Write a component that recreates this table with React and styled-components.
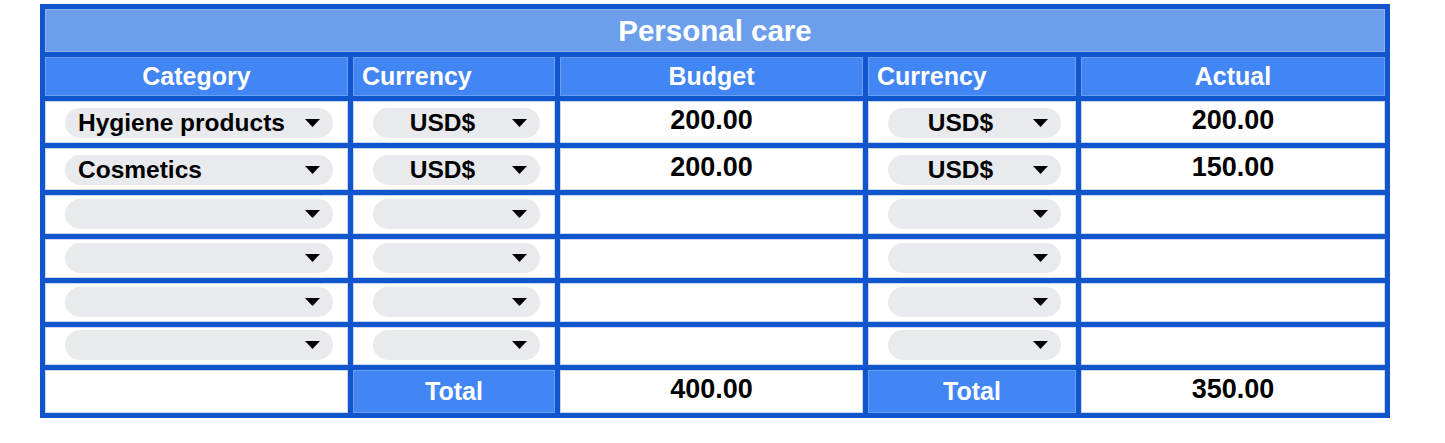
import React from 'react';
import styled, { createGlobalStyle } from 'styled-components';

const GlobalStyle = createGlobalStyle`
  body {
    margin: 0;
    background: #ffffff;
    font-family: "Liberation Sans", Arial, sans-serif;
  }
`;

const Page = styled.div`
  padding: 4px 0 0 40px;
`;

const Sheet = styled.div`
  display: grid;
  width: max-content;
  grid-template-columns: 303px 202px 303px 208px 304px;
  grid-template-rows: 43px 39px 42px 42px 39px 39px 39px 38px 43px;
  gap: 5px;
  padding: 5px;
  background: #1155cc;
`;

const Cell = styled.div`
  display: flex;
  align-items: center;
  justify-content: ${({ $left }) => ($left ? 'flex-start' : 'center')};
  padding-left: ${({ $left }) => ($left ? '9px' : '0')};
  background: ${({ $tone }) =>
    $tone === 'title' ? '#6d9eeb' : $tone === 'head' ? '#4285f4' : '#ffffff'};
  box-shadow: inset 0 0 0 1px
    ${({ $tone }) => ($tone === 'title' ? '#8fb3ef' : $tone === 'head' ? '#6a9ef6' : '#c9d6ee')};
  color: ${({ $tone }) => ($tone ? '#ffffff' : '#000000')};
  font-weight: 700;
  font-size: ${({ $tone }) => ($tone === 'title' ? '29.5px' : '25px')};
  ${({ $span }) => ($span ? `grid-column: 1 / span ${$span};` : '')}
`;

const Title = styled(Cell)`
  padding-top: 1px;
`;

const Amount = styled(Cell)`
  font-size: 27px;
  padding-bottom: 4px;
`;

const ChipCell = styled(Cell)`
  align-items: flex-end;
  justify-content: stretch;
  padding: 0 15px 5px 20px;
`;

const Chip = styled.div`
  flex: 1;
  display: flex;
  align-items: center;
  height: 30px;
  border-radius: 15px;
  background: #e8eaed;
  padding: 0 13px 0 ${({ $center }) => ($center ? '0' : '13px')};
  font-size: 24.5px;
  font-weight: 700;
  color: #000000;
`;

const ChipText = styled.span`
  flex: 1;
  text-align: ${({ $center }) => ($center ? 'center' : 'left')};
  white-space: nowrap;
`;

const Arrow = () => (
  <svg width="15" height="8" viewBox="0 0 15 8" style={{ flex: 'none' }}>
    <polygon points="0,0 15,0 7.5,8" fill="#000000" />
  </svg>
);

const Select = ({ value, center }) => (
  <ChipCell>
    <Chip $center={center}>
      <ChipText $center={center}>{value}</ChipText>
      <Arrow />
    </Chip>
  </ChipCell>
);

const rows = [
  { category: 'Hygiene products', currency: 'USD$', budget: '200.00', actualCurrency: 'USD$', actual: '200.00' },
  { category: 'Cosmetics', currency: 'USD$', budget: '200.00', actualCurrency: 'USD$', actual: '150.00' },
  {}, {}, {}, {},
];

export default function App() {
  return (
    <>
      <GlobalStyle />
      <Page>
        <Sheet>
          <Title $tone="title" $span={5}>Personal care</Title>

          <Cell $tone="head">Category</Cell>
          <Cell $tone="head" $left>Currency</Cell>
          <Cell $tone="head">Budget</Cell>
          <Cell $tone="head" $left>Currency</Cell>
          <Cell $tone="head">Actual</Cell>

          {rows.map((row, i) => (
            <React.Fragment key={i}>
              <Select value={row.category} />
              <Select value={row.currency} center />
              <Amount>{row.budget}</Amount>
              <Select value={row.actualCurrency} center />
              <Amount>{row.actual}</Amount>
            </React.Fragment>
          ))}

          <Cell />
          <Cell $tone="head">Total</Cell>
          <Amount>400.00</Amount>
          <Cell $tone="head">Total</Cell>
          <Amount>350.00</Amount>
        </Sheet>
      </Page>
    </>
  );
}
